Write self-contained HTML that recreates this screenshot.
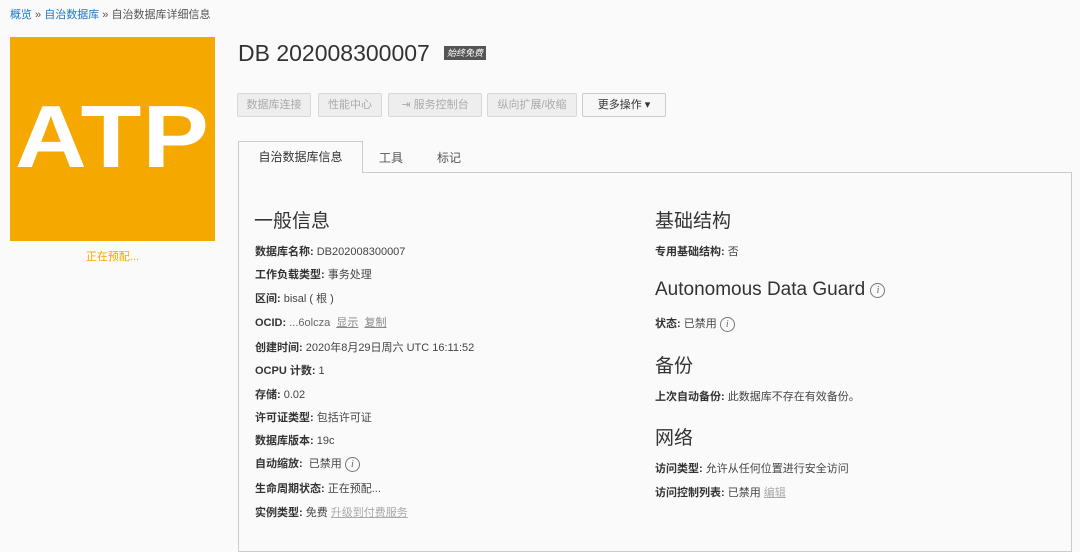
<!DOCTYPE html>
<html><head><meta charset="utf-8"><style>
*{margin:0;padding:0;box-sizing:border-box}
body{width:1080px;height:542px;background:#fafafa;font-family:"Liberation Sans","Noto Sans CJK SC",sans-serif;color:#333;position:relative;overflow:hidden;font-size:11px}
.a{position:absolute;white-space:nowrap}
.bc{left:10px;top:6px;font-size:11px;color:#555}
.bc b{font-weight:normal;color:#1b78c9}
.atp{left:10px;top:37px;width:205px;height:204px;background:#f5a800}
.atp span{position:absolute;left:0;width:205px;top:0;text-align:center;color:#fff;font-weight:bold;font-size:88px;line-height:200px;transform:scaleX(1.13);letter-spacing:1px}
.st{left:10px;width:205px;top:248px;text-align:center;color:#f5a800;font-size:11px}
.title{left:238px;top:40px;font-size:23px;color:#333}
.badge{left:444px;top:46px;background:#555;color:#fff;font-size:9px;font-style:italic;padding:1px 3px;line-height:12px}
.btn{top:93px;height:24px;border:1px solid #d8d8d8;background:#eee;color:#aaa;font-size:11px;line-height:22px;text-align:center;border-radius:2px}
.panel{left:238px;top:172px;width:834px;height:380px;border:1px solid #ccc;background:#fafafa}
.tab{left:238px;top:141px;width:125px;height:32px;border:1px solid #ccc;border-bottom:none;background:#fafafa;text-align:center;line-height:30px;font-size:12px;color:#333}
.t2{top:149px;font-size:12px;color:#555}
h2{position:absolute;font-weight:normal;font-size:19px;color:#333;white-space:nowrap}
.r{position:absolute;font-size:11px;color:#444;white-space:nowrap}
.r b{color:#333}
.lk{color:#888;text-decoration:underline}
.lk2{color:#aaa;text-decoration:underline}
.i{display:inline-block;width:15px;height:15px;border:1px solid #777;border-radius:50%;font-size:10px;font-style:italic;text-align:center;line-height:13px;color:#666;vertical-align:middle;font-family:"Liberation Serif",serif}
</style></head><body>
<div class="a bc"><b>概览</b> » <b>自治数据库</b> » 自治数据库详细信息</div>
<div class="a atp"><span>ATP</span></div>
<div class="a st">正在预配...</div>
<div class="a title">DB 202008300007</div>
<div class="a badge">始终免费</div>
<div class="a btn" style="left:237px;width:74px">数据库连接</div>
<div class="a btn" style="left:318px;width:64px">性能中心</div>
<div class="a btn" style="left:388px;width:94px">⇥ 服务控制台</div>
<div class="a btn" style="left:487px;width:90px">纵向扩展/收缩</div>
<div class="a btn" style="left:582px;width:84px;background:#f7f7f7;color:#333;border-color:#ccc">更多操作 ▾</div>
<div class="a panel"></div>
<div class="a tab">自治数据库信息</div>
<div class="a t2" style="left:379px">工具</div>
<div class="a t2" style="left:437px">标记</div>

<h2 style="left:254px;top:206px">一般信息</h2>
<div class="r" style="left:255px;top:243px"><b>数据库名称:</b> DB202008300007</div>
<div class="r" style="left:255px;top:266px"><b>工作负载类型:</b> 事务处理</div>
<div class="r" style="left:255px;top:290px"><b>区间:</b> bisal ( 根 )</div>
<div class="r" style="left:255px;top:314px"><b>OCID:</b> <span style="color:#666">...6olcza</span> &nbsp;<span class="lk">显示</span> &nbsp;<span class="lk">复制</span></div>
<div class="r" style="left:255px;top:339px"><b>创建时间:</b> 2020年8月29日周六 UTC 16:11:52</div>
<div class="r" style="left:255px;top:362px"><b>OCPU 计数:</b> 1</div>
<div class="r" style="left:255px;top:386px"><b>存储:</b> 0.02</div>
<div class="r" style="left:255px;top:409px"><b>许可证类型:</b> 包括许可证</div>
<div class="r" style="left:255px;top:432px"><b>数据库版本:</b> 19c</div>
<div class="r" style="left:255px;top:455px"><b>自动缩放:</b> &nbsp;已禁用 <span class="i">i</span></div>
<div class="r" style="left:255px;top:480px"><b>生命周期状态:</b> 正在预配...</div>
<div class="r" style="left:255px;top:504px"><b>实例类型:</b> 免费 <span class="lk2">升级到付费服务</span></div>

<h2 style="left:655px;top:206px">基础结构</h2>
<div class="r" style="left:655px;top:243px"><b>专用基础结构:</b> 否</div>
<h2 style="left:655px;top:279px">Autonomous Data Guard <span class="i" style="vertical-align:2px">i</span></h2>
<div class="r" style="left:655px;top:315px"><b>状态:</b> 已禁用 <span class="i">i</span></div>
<h2 style="left:655px;top:351px">备份</h2>
<div class="r" style="left:655px;top:388px"><b>上次自动备份:</b> 此数据库不存在有效备份。</div>
<h2 style="left:655px;top:423px">网络</h2>
<div class="r" style="left:655px;top:460px"><b>访问类型:</b> 允许从任何位置进行安全访问</div>
<div class="r" style="left:655px;top:484px"><b>访问控制列表:</b> 已禁用 <span class="lk2">编辑</span></div>
</body></html>
